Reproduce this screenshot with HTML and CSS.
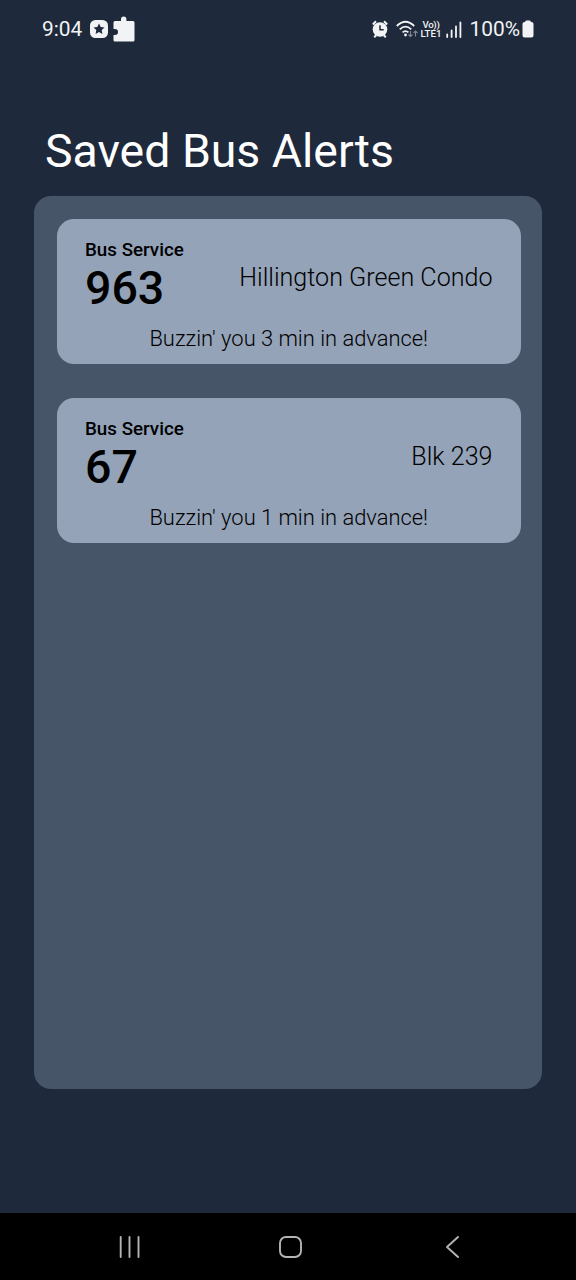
FILE: index.html
```
<!DOCTYPE html>
<html lang="en">
<head>
<meta charset="utf-8">
<title>Saved Bus Alerts</title>
<link rel="stylesheet" href="styles.css">
</head>
<body>
<div class="screen">
  <header class="status-bar">
    <div class="status-left">
      <span class="clock">9:04</span>
      <svg class="star-icon" width="18" height="18" viewBox="0 0 18 18"><rect width="18" height="18" rx="5.5" fill="#f2f3f5"/><path d="M9 3.500l1.700 3.500 3.800.5-2.800 2.600.7 3.900L9 12.100 5.600 14l.7-3.900-2.800-2.600 3.800-.5z" fill="#1e293b"/></svg>
      <svg class="puzzle-icon" width="22" height="26" viewBox="0 0 22 26"><path d="M2 5H8V3.200a2.700 2.700 0 0 1 5.400 0V5H20q1.500 0 1.500 1.500V24q0 1.500-1.500 1.500H2Q.5 25.500.5 24v-5H2a3 3 0 0 0 0-6H.5V6.500Q.5 5 2 5z" fill="#f2f3f5"/></svg>
    </div>
    <div class="status-right">
      <svg class="alarm-icon" width="16" height="18" viewBox="0 0 16 18"><circle cx="8" cy="9.500" r="7.300" fill="#f2f3f5"/><path d="M.8 4.500L4 1.300M15.200 4.500L12 1.300M2.200 17.300l2-2M13.800 17.300l-2-2" stroke="#f2f3f5" stroke-width="2"/><path d="M8 5.300v4.500h3.700" fill="none" stroke="#1e293b" stroke-width="1.500"/></svg>
      <svg class="wifi-icon" width="23" height="18" viewBox="0 0 23 18"><g fill="none" stroke="#f2f3f5" stroke-width="1.800"><path d="M.8 6Q9.500-2.500 18.200 6M3.800 9.300q5.700-5.400 11.400 0M6.600 12.400q2.900-2.600 5.800 0"/></g><circle cx="9.500" cy="15" r="1.400" fill="#f2f3f5"/><path d="M14.500 11v5.500m-2-2l2 2 2-2M19.500 16.500V11m-2 2l2-2 2 2" fill="none" stroke="#7e8896" stroke-width="1.100"/></svg>
      <span class="volte"><span class="vo">Vo))</span><span>LTE1</span></span>
      <svg class="signal-icon" width="16" height="17" viewBox="0 0 16 17"><path d="M1.200 16v-2.500M5.600 16V9.500M10 16V5.500M14.400 16V1.500" stroke="#f2f3f5" stroke-width="1.800" stroke-linecap="round"/></svg>
      <span class="percent">100%</span>
      <svg class="battery-icon" width="12" height="18" viewBox="0 0 12 18"><path d="M3.300 2V1.500q0-1 1-1h3.400q1 0 1 1V2H9.500Q11.500 2 11.500 4v11.500q0 2-2 2h-7q-2 0-2-2V4Q.5 2 2.500 2z" fill="#f2f3f5"/></svg>
    </div>
  </header>
  <main class="content">
    <h1 class="title">Saved Bus Alerts</h1>
    <section class="alerts">
      <article class="card">
        <div class="summary">
          <div><div class="label">Bus Service</div><div class="number">963</div></div>
          <div class="stop">Hillington Green Condo</div>
        </div>
        <p class="notice">Buzzin' you 3 min in advance!</p>
      </article>
      <article class="card">
        <div class="summary">
          <div><div class="label">Bus Service</div><div class="number">67</div></div>
          <div class="stop">Blk 239</div>
        </div>
        <p class="notice">Buzzin' you 1 min in advance!</p>
      </article>
    </section>
  </main>
  <nav class="nav-bar">
    <svg width="22" height="22" viewBox="0 0 22 22"><path d="M1.700 1v20M10.500 1v20M19.500 1v20" stroke="#b4b4b4" stroke-width="1.900" stroke-linecap="round"/></svg>
    <svg class="home-icon" width="23" height="22" viewBox="0 0 23 22"><rect x="1" y="1" width="21" height="20" rx="6" fill="none" stroke="#b4b4b4" stroke-width="1.900"/></svg>
    <svg width="14" height="22" viewBox="0 0 14 22"><path d="M12 1L1 11l11 10" fill="none" stroke="#b4b4b4" stroke-width="1.900" stroke-linecap="round" stroke-linejoin="round"/></svg>
  </nav>
</div>
</body>
</html>
```
FILE: styles.css
```
* { box-sizing: border-box; }
body { margin: 0; background: #1e293b; font-family: Roboto, sans-serif; }
.screen { width: 576px; height: 1280px; display: flex; flex-direction: column; }
.status-bar { height: 58px; padding: 0 42px 0 42px; display: flex; justify-content: space-between; align-items: center; color: #f2f3f5; }
.status-left, .status-right { display: flex; align-items: center; }
.clock, .percent { font-size: 20.9px; line-height: 24px; }
.star-icon { margin-left: 7.5px; }
.puzzle-icon { margin-left: 5px; }
.wifi-icon { margin-left: 7.5px; }
.volte { display: flex; flex-direction: column; width: 22px; margin-left: 1px; font-size: 9.7px; font-weight: 500; line-height: 9px; text-align: center; white-space: nowrap; }
.vo { letter-spacing: -0.3px; }
.signal-icon { margin-left: 4px; }
.percent { margin-left: 7.5px; }
.battery-icon { margin-left: 2px; }
.content { flex: 1; padding: 66px 34px 0; }
.title { margin: 0; padding: 0 11px; height: 72px; color: #fff; font-size: 46.4px; font-weight: 400; line-height: 54px; white-space: nowrap; }
.alerts { height: 893px; padding: 23px 21.5px 0 22.5px; border-radius: 17px; background: #475569; }
.card { height: 145px; margin-bottom: 34px; padding: 20px 28px 0 28.5px; border-radius: 17px; background: #94a3b8; color: #000; }
.summary { display: flex; justify-content: space-between; height: 76px; }
.label { font-size: 18.8px; font-weight: 500; line-height: 22px; }
.number { font-size: 46.5px; font-weight: 500; line-height: 54px; }
.stop { padding-top: 24px; font-size: 25.1px; font-weight: 300; line-height: 30px; }
.notice { margin: 11px 0 0; font-size: 21.9px; font-weight: 300; line-height: 26px; text-align: center; }
.nav-bar { height: 67px; padding: 0 116px 0 119px; display: flex; justify-content: space-between; align-items: center; background: #000; }
.home-icon { margin-right: 6px; }
```
